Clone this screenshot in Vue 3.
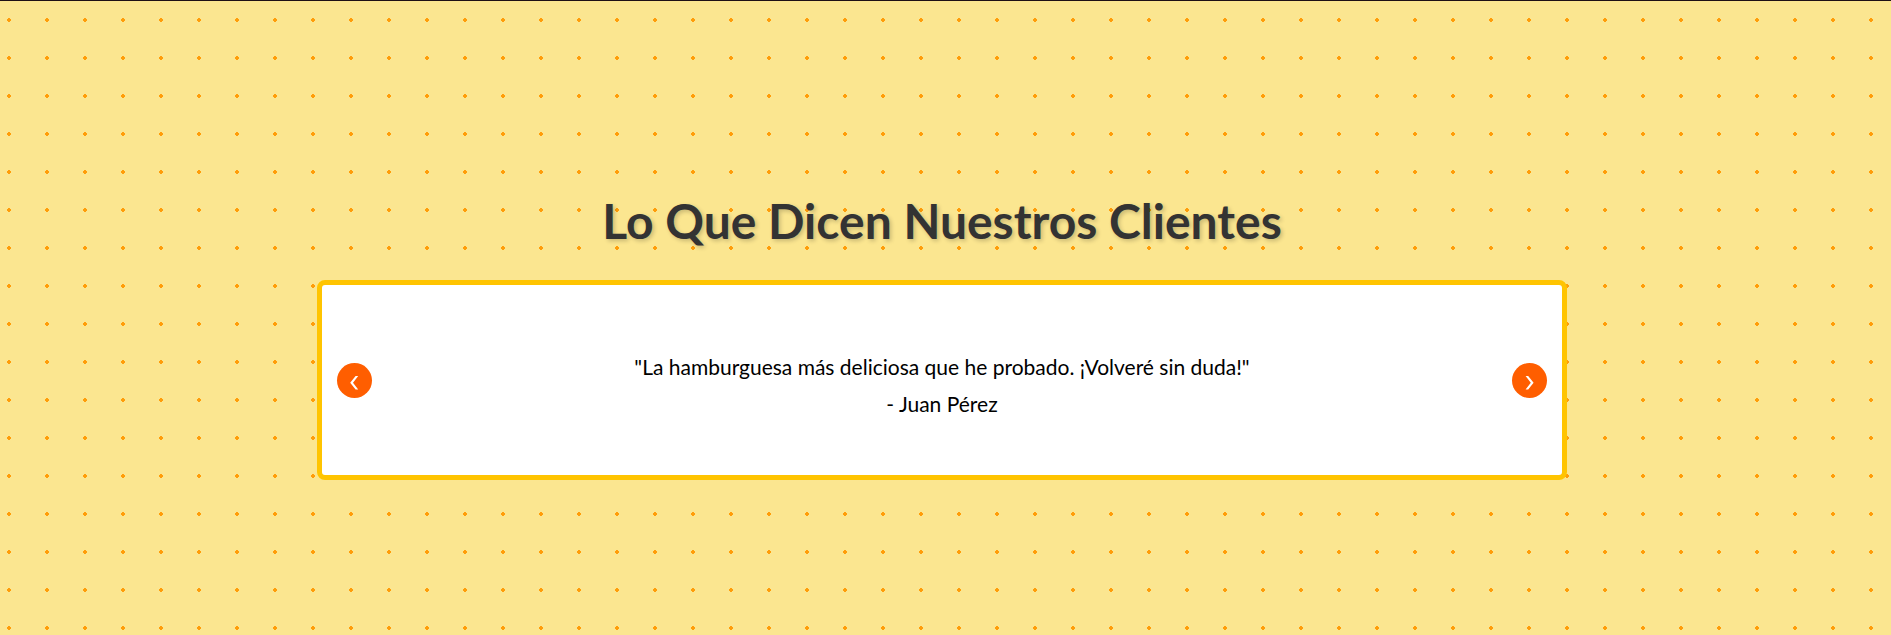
<script setup>
import { computed, ref } from 'vue'

const testimonials = [
  { quote: '"La hamburguesa más deliciosa que he probado. ¡Volveré sin duda!"', author: '- Juan Pérez' },
]
const current = ref(0)
const active = computed(() => testimonials[current.value])

function move(step) {
  current.value = (current.value + step + testimonials.length) % testimonials.length
}
</script>

<template>
  <section class="testimonials">
    <h2 class="title">Lo Que Dicen Nuestros Clientes</h2>
    <div class="carousel">
      <button class="arrow" type="button" aria-label="Anterior" @click="move(-1)">
        <svg viewBox="0 0 35 35" aria-hidden="true"><path d="M21.2 13 L18.6 13 L13.2 19.7 L18.6 26.6 L21.2 26.6 L16 19.7 Z" /></svg>
      </button>
      <blockquote class="quote">
        <p>{{ active.quote }}</p>
        <p>{{ active.author }}</p>
      </blockquote>
      <button class="arrow" type="button" aria-label="Siguiente" @click="move(1)">
        <svg viewBox="0 0 35 35" aria-hidden="true"><path d="M13.6 13 L16.2 13 L21.6 19.7 L16.2 26.6 L13.6 26.6 L18.8 19.7 Z" /></svg>
      </button>
    </div>
  </section>
</template>

<style>
body {
  background: #fbe690;
}
</style>

<style scoped>
.testimonials {
  box-sizing: border-box;
  min-height: 100vh;
  padding: 186px 27px 80px 20px;
  border-top: 1px solid #1d1014;
  background: #fbe690 radial-gradient(circle, #ff9d0a 2px, transparent 2px) -10px 0 / 38px 38px;
  font-family: Lato, "Noto Sans", sans-serif;
}

.title {
  margin: 0 0 25px;
  color: #333;
  font-size: 48px;
  font-weight: 700;
  line-height: 68px;
  text-align: center;
  text-shadow: 2px 2px 4px rgba(0, 0, 0, 0.2);
}

.carousel {
  box-sizing: border-box;
  display: flex;
  align-items: center;
  justify-content: space-between;
  gap: 20px;
  max-width: 1250px;
  min-height: 200px;
  margin: 0 auto;
  padding: 20px 15px;
  border: 5px solid #ffc400;
  border-radius: 8px;
  background: #fff;
}

.quote {
  margin: 0;
  padding-top: 10px;
  color: #000;
  font-size: 21px;
  line-height: 37px;
  text-align: center;
}

.quote p {
  margin: 0;
}

.arrow {
  flex: none;
  width: 35px;
  height: 35px;
  padding: 0;
  border: 0;
  border-radius: 50%;
  background: #ff5e00;
  cursor: pointer;
}

.arrow svg {
  display: block;
  width: 35px;
  height: 35px;
  fill: #fff;
}
</style>
